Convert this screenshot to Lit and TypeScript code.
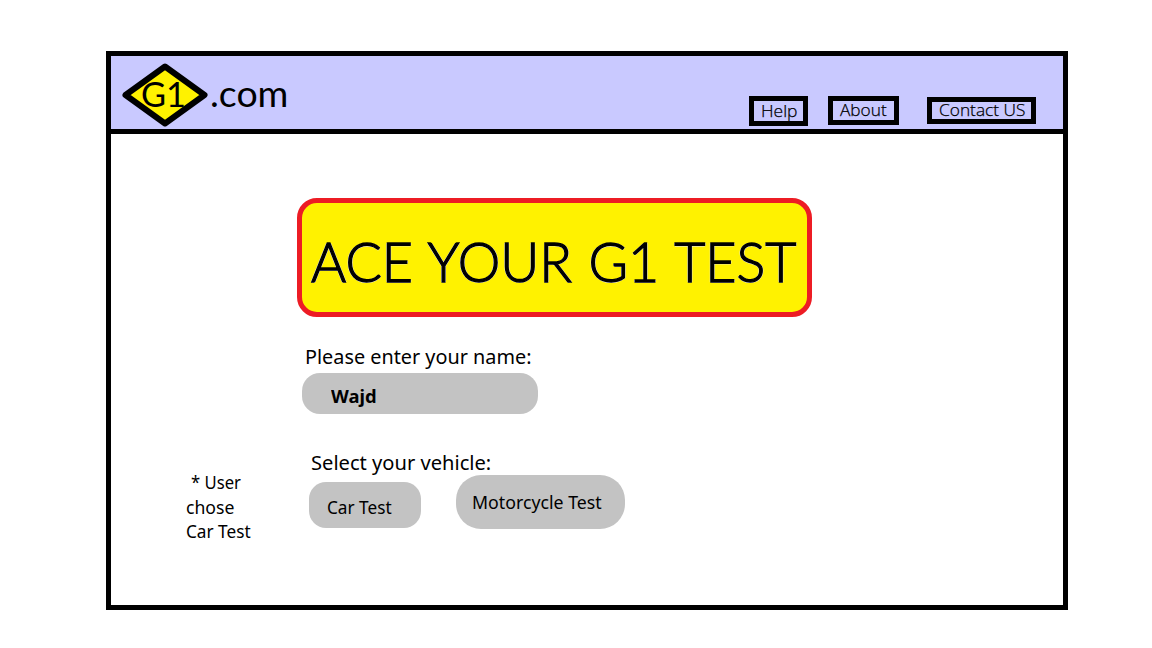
import { LitElement, html, css } from "lit";
import { customElement, property } from "lit/decorators.js";

/** A single line of text, condensed or widened to fill the given width. */
@customElement("fit-text")
class FitText extends LitElement {
  @property({ type: Number }) width = 100;

  static styles = css`
    :host { display: block; white-space: nowrap; flex: none; }
    .line { display: inline-block; transform-origin: 0 50%; white-space: pre; }
  `;

  firstUpdated() {
    const line = this.renderRoot.querySelector(".line") as HTMLElement;
    this.style.width = `${this.width}px`;
    const fit = () => {
      if (line.offsetWidth) line.style.transform = `scaleX(${this.width / line.offsetWidth})`;
    };
    fit();
    document.fonts.ready.then(fit);
  }

  render() {
    return html`<span class="line"><slot></slot></span>`;
  }
}

@customElement("app-root")
class AppRoot extends LitElement {
  static styles = css`
    :host {
      display: block;
      box-sizing: border-box;
      width: 1152px;
      height: 648px;
      padding: 51px 0 0 106px;
      overflow: hidden;
      background: #fff;
      color: #000;
      font-family: "Noto Sans", "Open Sans", sans-serif;
    }
    * { box-sizing: border-box; }
    .frame { width: 962px; height: 559px; border: 5px solid #000; }
    header {
      display: flex;
      align-items: flex-start;
      height: 78px;
      padding: 7px 27px 0 11px;
      background: #c9c9ff;
      border-bottom: 5px solid #000;
      font-family: Lato, "Noto Sans", sans-serif;
    }
    .sign { display: block; width: 86px; height: 64px; flex: none; }
    .sign text { font: 400 34px Lato, sans-serif; }
    .domain { margin-left: 2px; font-size: 36px; line-height: 61px; }
    nav { display: flex; align-items: flex-start; margin-left: auto; padding-top: 33px; }
    .link {
      display: flex;
      padding-left: 7px;
      border: 5px solid #000;
      font-size: 16.5px;
      font-weight: 300;
      font-family: "Open Sans", sans-serif;
      -webkit-text-stroke: 0.25px #000;
    }
    .help { width: 59px; height: 30px; line-height: 20px; }
    .about { width: 71px; height: 29px; margin-left: 20px; line-height: 18px; }
    .contact { width: 109px; height: 27px; margin: 1px 0 0 28px; line-height: 16px; }
    .body { display: flex; align-items: flex-start; }
    aside { width: 110px; margin: 336px 0 0 75px; font-size: 18px; line-height: 24.5px; }
    .first { padding-left: 5px; }
    main { padding-top: 64px; }
    .banner {
      display: flex;
      width: 515px;
      height: 119px;
      margin-left: 1px;
      padding-left: 9px;
      border: 5px solid #ed1c24;
      border-radius: 20px;
      background: #fff200;
      font: 300 56px/115px Lato, sans-serif;
      word-spacing: 2px;
      -webkit-text-stroke: 1.3px #000;
      text-shadow: 1px 0 #e4e4f4, -1px 0 #e4e4f4, 0 1px #e4e4f4;
    }
    .label { font-size: 20px; line-height: 28px; }
    .name { margin: 26px 0 0 9px; }
    .vehicle { margin: 35px 0 0 15px; }
    .field {
      display: flex;
      width: 236px;
      height: 41px;
      margin: 1.5px 0 0 5.5px;
      padding-left: 29.5px;
      border-radius: 18px;
      background: #c3c3c3;
      font-size: 18px;
      font-weight: 700;
      line-height: 47px;
    }
    .choices { display: flex; align-items: flex-start; margin: -1.5px 0 0 13px; font-size: 18px; }
    .pill { display: flex; background: #c3c3c3; }
    .car { width: 112px; height: 46px; margin-top: 7px; padding-left: 18px; border-radius: 17px; line-height: 50px; }
    .moto { width: 169px; height: 54px; margin-left: 35px; padding-left: 16px; border-radius: 25px; line-height: 54px; }
  `;

  render() {
    return html`
      <div class="frame">
        <header>
          <svg class="sign" viewBox="0 0 86 64">
            <path d="M43 3.500 82.500 32 43 60.500 3.500 32Z" fill="#fff200" stroke="#000" stroke-width="6" stroke-linejoin="round" />
            <text x="19" y="44" textLength="45" lengthAdjust="spacingAndGlyphs">G1</text>
          </svg>
          <fit-text class="domain" width="78">.com</fit-text>
          <nav>
            <div class="link help"><fit-text width="36">Help</fit-text></div>
            <div class="link about"><fit-text width="47">About</fit-text></div>
            <div class="link contact"><fit-text width="86">Contact US</fit-text></div>
          </nav>
        </header>
        <div class="body">
          <aside>
            <fit-text class="first" width="50">* User</fit-text>
            <fit-text width="48">chose</fit-text>
            <fit-text width="65">Car Test</fit-text>
          </aside>
          <main>
            <div class="banner"><fit-text width="485">ACE YOUR G1 TEST</fit-text></div>
            <div class="label name"><fit-text width="226">Please enter your name:</fit-text></div>
            <div class="field"><fit-text width="46">Wajd</fit-text></div>
            <div class="label vehicle"><fit-text width="180">Select your vehicle:</fit-text></div>
            <div class="choices">
              <div class="pill car"><fit-text width="65">Car Test</fit-text></div>
              <div class="pill moto"><fit-text width="130">Motorcycle Test</fit-text></div>
            </div>
          </main>
        </div>
      </div>
    `;
  }
}
